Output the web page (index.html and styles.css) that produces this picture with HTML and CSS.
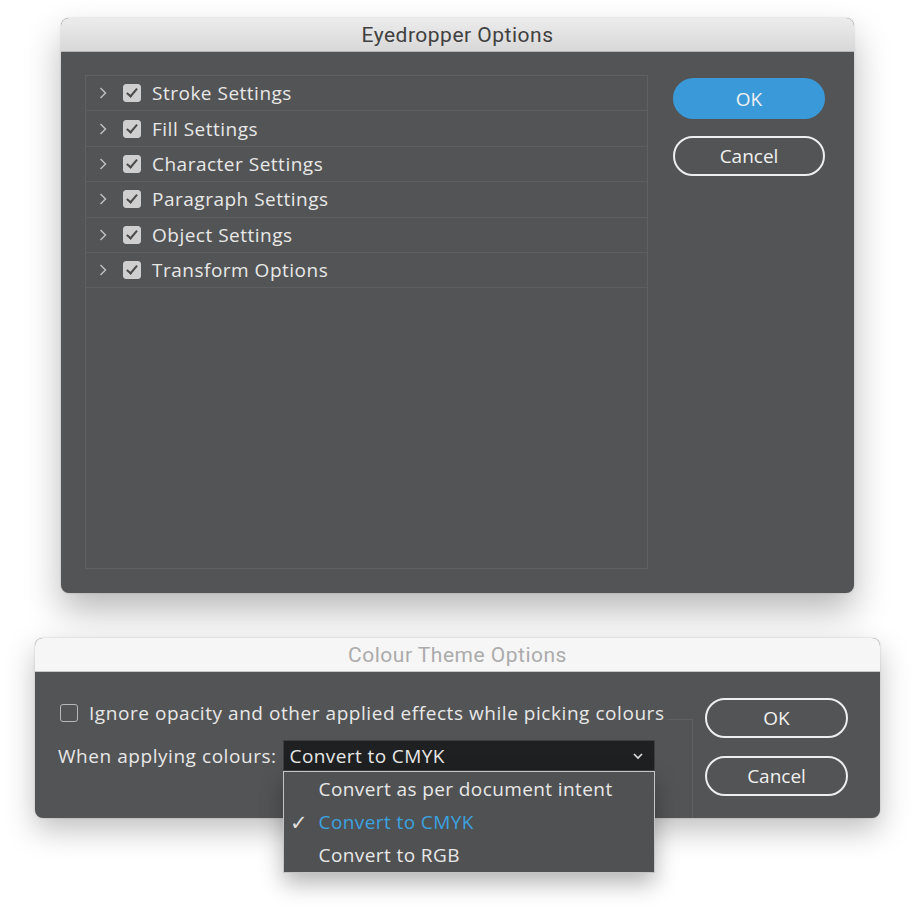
FILE: index.html
```html
<!DOCTYPE html>
<html lang="en">
<head>
    <meta charset="UTF-8">
    <meta name="viewport" content="width=device-width, initial-scale=1.0">
    <title>Eyedropper Options</title>
    <link rel="stylesheet" href="styles.css">
</head>
<body>
    <div class="page">
        <!-- Eyedropper dialog -->
        <div class="dialog eyedropper">
            <div class="titlebar">Eyedropper Options</div>
            <div class="dialog-body">
                <ul class="settings-list">
                    <li class="setting"><svg class="chevron" width="8" height="12" viewBox="0 0 8 12"><path d="M1.5 1 L6.5 6 L1.5 11" fill="none" stroke="#bdbdbd" stroke-width="1.5"/></svg><span class="check on"></span>Stroke Settings</li>
                    <li class="setting"><svg class="chevron" width="8" height="12" viewBox="0 0 8 12"><path d="M1.5 1 L6.5 6 L1.5 11" fill="none" stroke="#bdbdbd" stroke-width="1.5"/></svg><span class="check on"></span>Fill Settings</li>
                    <li class="setting"><svg class="chevron" width="8" height="12" viewBox="0 0 8 12"><path d="M1.5 1 L6.5 6 L1.5 11" fill="none" stroke="#bdbdbd" stroke-width="1.5"/></svg><span class="check on"></span>Character Settings</li>
                    <li class="setting"><svg class="chevron" width="8" height="12" viewBox="0 0 8 12"><path d="M1.5 1 L6.5 6 L1.5 11" fill="none" stroke="#bdbdbd" stroke-width="1.5"/></svg><span class="check on"></span>Paragraph Settings</li>
                    <li class="setting"><svg class="chevron" width="8" height="12" viewBox="0 0 8 12"><path d="M1.5 1 L6.5 6 L1.5 11" fill="none" stroke="#bdbdbd" stroke-width="1.5"/></svg><span class="check on"></span>Object Settings</li>
                    <li class="setting"><svg class="chevron" width="8" height="12" viewBox="0 0 8 12"><path d="M1.5 1 L6.5 6 L1.5 11" fill="none" stroke="#bdbdbd" stroke-width="1.5"/></svg><span class="check on"></span>Transform Options</li>
                </ul>
                <div class="actions">
                    <button class="btn primary">OK</button>
                    <button class="btn">Cancel</button>
                </div>
            </div>
        </div>

        <!-- Colour theme dialog -->
        <div class="dialog theme">
            <div class="titlebar inactive">Colour Theme Options</div>
            <div class="dialog-body">
                <div class="options">
                    <div class="check-row"><span class="check"></span>Ignore opacity and other applied effects while picking colours</div>
                    <div class="select-row">
                        <span class="select-label">When applying colours:</span>
                        <div class="select">
                            <span>Convert to CMYK</span>
                            <svg class="caret" width="12" height="8" viewBox="0 0 12 8"><path d="M2 2 L6 6 L10 2" fill="none" stroke="#e0e0e0" stroke-width="1.6"/></svg>
                            <ul class="menu">
                                <li>Convert as per document intent</li>
                                <li class="selected"><span class="tick">&#10003;</span>Convert to CMYK</li>
                                <li>Convert to RGB</li>
                            </ul>
                        </div>
                    </div>
                </div>
                <div class="actions">
                    <button class="btn">OK</button>
                    <button class="btn">Cancel</button>
                </div>
            </div>
        </div>
    </div>
</body>
</html>
```

FILE: styles.css
```css
body {
    margin: 0;
    background-color: #ffffff;
    font-family: "Open Sans", "Noto Sans", sans-serif;
}

.page {
    display: flex;
    flex-direction: column;
    align-items: flex-start;
    padding-top: 18px;
    min-height: 922px;
    box-sizing: border-box;
}

.dialog {
    background-color: #535455;
    border-radius: 8px;
}

.eyedropper {
    margin-left: 61px;
    width: 793px;
    box-shadow: 0 18px 36px rgba(0,0,0,0.28), 0 0 2px rgba(0,0,0,0.2);
}

.theme {
    margin-left: 35px;
    margin-top: 45px;
    width: 845px;
    box-shadow: 0 12px 30px rgba(0,0,0,0.25), 0 0 2px rgba(0,0,0,0.2);
}

.titlebar {
    height: 33px;
    line-height: 34px;
    text-align: center;
    font-family: "Roboto", sans-serif;
    font-size: 21px;
    letter-spacing: 0.5px;
    color: #404040;
    background: linear-gradient(#ececec, #d8d8d8);
    border-bottom: 1px solid #b5b5b5;
    border-radius: 8px 8px 0 0;
}

.titlebar.inactive {
    background: #f6f6f6;
    color: #ababab;
    border-bottom-color: #c8c8c8;
}

.dialog-body {
    display: flex;
    color: #e8e8e8;
}

.eyedropper .dialog-body {
    padding: 23px 29px 24px 24px;
    gap: 25px;
}

/* list of sample settings */
.settings-list {
    list-style: none;
    margin: 0;
    padding: 0;
    width: 563px;
    height: 494px;
    box-sizing: border-box;
    border: 1px solid #606162;
}

.setting {
    display: flex;
    align-items: center;
    height: 35.4px;
    box-sizing: border-box;
    border-bottom: 1px solid #5e5f60;
    font-size: 19px;
    letter-spacing: 0.5px;
}

.chevron {
    margin-left: 13px;
    margin-right: 16px;
    flex-shrink: 0;
}

.check {
    width: 18px;
    height: 18px;
    box-sizing: border-box;
    border-radius: 3px;
    border: 1.5px solid #b8b8b8;
    margin-right: 11px;
    flex-shrink: 0;
    position: relative;
}

.check.on {
    background-color: #cfcfcf;
    border-color: #cfcfcf;
}

.check.on::after {
    content: "";
    position: absolute;
    left: 5px;
    top: 1px;
    width: 4px;
    height: 9px;
    border: solid #4a4a4a;
    border-width: 0 2px 2px 0;
    transform: rotate(40deg);
}

.actions {
    display: flex;
    flex-direction: column;
}

.btn {
    font-family: "Open Sans", sans-serif;
    font-size: 19px;
    color: #f0f0f0;
    background: transparent;
    border: 2px solid #eeeeee;
    border-radius: 22px;
    cursor: pointer;
}

.eyedropper .btn {
    width: 152px;
    height: 40px;
    margin-top: 3px;
}

.eyedropper .btn + .btn {
    margin-top: 17px;
}

.btn.primary {
    background-color: #3a9ad9;
    border-color: #3a9ad9;
    height: 41px;
}

/* colour theme body */
.theme .dialog-body {
    position: relative;
    padding: 26px 32px 22px 23px;
    justify-content: space-between;
}

.theme .dialog-body::before {
    content: "";
    position: absolute;
    left: 633px;
    width: 24px;
    top: 47px;
    bottom: 0;
    border-top: 1px solid #606162;
    border-right: 1px solid #606162;
}

.options {
    font-size: 19px;
    letter-spacing: 0.55px;
    padding-top: 3px;
    position: relative;
}

.check-row {
    display: flex;
    align-items: center;
    height: 24px;
}

.check-row .check {
    margin-left: 2px;
    margin-right: 11px;
}

.select-row {
    display: flex;
    align-items: center;
    margin-top: 15px;
}

.select-label {
    margin-right: 6px;
}

.select {
    position: relative;
    width: 372px;
    height: 31px;
    box-sizing: border-box;
    background-color: #1f2021;
    border: 1px solid #3e3f40;
    display: flex;
    align-items: center;
    justify-content: space-between;
    padding: 0 10px 0 6px;
    letter-spacing: 0.4px;
}

.menu {
    position: absolute;
    top: 30px;
    left: -1px;
    width: 372px;
    box-sizing: border-box;
    margin: 0;
    padding: 1px 0 0;
    list-style: none;
    background-color: #505152;
    border: 1px solid #c4c4c4;
    box-shadow: 0 10px 22px rgba(0,0,0,0.3);
    z-index: 2;
}

.menu li {
    height: 33px;
    line-height: 33px;
    padding-left: 35px;
    position: relative;
}

.menu li.selected {
    color: #3ba2e0;
}

.tick {
    position: absolute;
    left: 6px;
    font-size: 21px;
    color: #e0e0e0;
}

.theme .btn {
    width: 143px;
    height: 40px;
}

.theme .btn + .btn {
    margin-top: 18px;
}
```
